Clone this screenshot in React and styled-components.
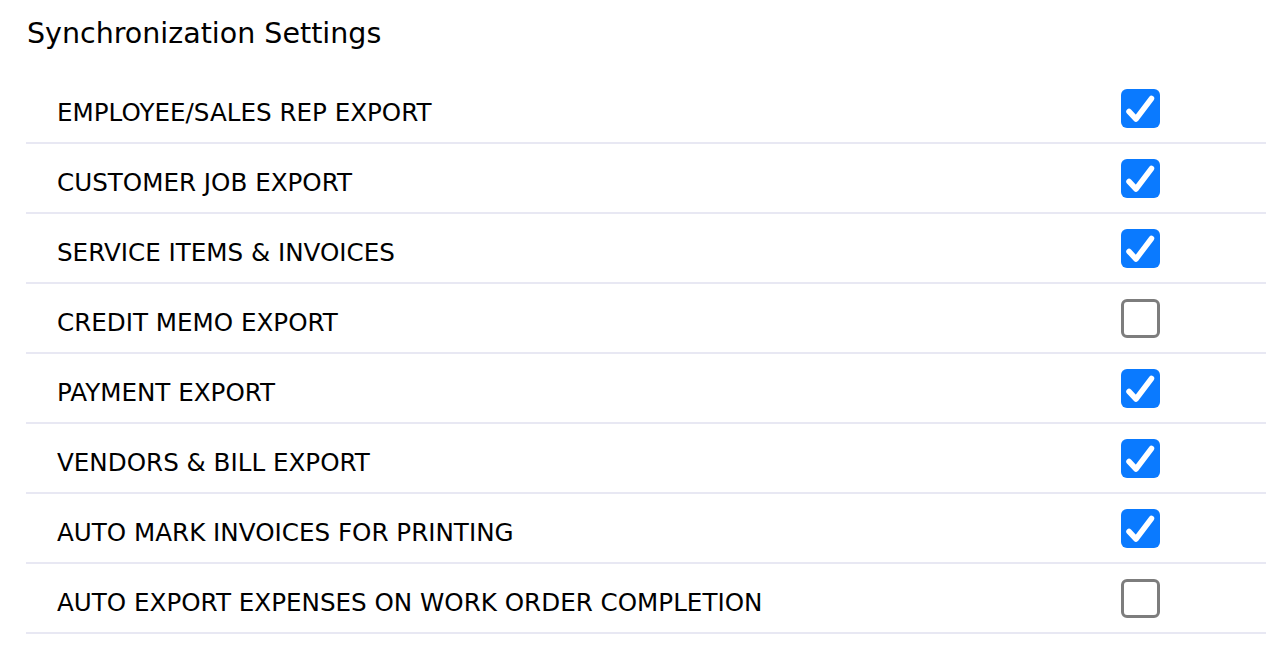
import React, { useState } from "react";
import styled, { createGlobalStyle } from "styled-components";

const Global = createGlobalStyle`
  html, body { margin: 0; padding: 0; background: #ffffff; }
  body { font-family: "DejaVu Sans", Verdana, sans-serif; color: #000; }
`;

const Page = styled.div`
  padding: 14px 22px 0 26px;
`;

const Title = styled.h2`
  margin: 0 0 0 1px;
  font-size: 28.5px;
  font-weight: 400;
  line-height: 40px;
  height: 60px;
`;

const List = styled.div`
  display: flex;
  flex-direction: column;
`;

const Row = styled.label`
  display: flex;
  align-items: center;
  justify-content: space-between;
  box-sizing: border-box;
  height: 70px;
  border-bottom: 2px solid #e8e8f3;
  padding: 0 106px 0 31px;
  cursor: pointer;
`;

const Label = styled.span`
  font-size: 24.6px;
  padding-top: 8px;
`;

const Box = styled.span`
  width: 39px;
  height: 39px;
  box-sizing: border-box;
  border-radius: 6px;
  display: flex;
  align-items: center;
  justify-content: center;
  background: ${(p) => (p.$checked ? "#0a7aff" : "#ffffff")};
  border: ${(p) => (p.$checked ? "none" : "3px solid #7d7d7d")};
`;

const Check = () => (
  <svg width="39" height="39" viewBox="0 0 39 39">
    <path
      d="M8 22.5 L15 30 L30.5 9.5"
      fill="none"
      stroke="#fff"
      strokeWidth="5.5"
      strokeLinecap="round"
      strokeLinejoin="round"
    />
  </svg>
);

const items = [
  ["EMPLOYEE/SALES REP EXPORT", true],
  ["CUSTOMER JOB EXPORT", true],
  ["SERVICE ITEMS & INVOICES", true],
  ["CREDIT MEMO EXPORT", false],
  ["PAYMENT EXPORT", true],
  ["VENDORS & BILL EXPORT", true],
  ["AUTO MARK INVOICES FOR PRINTING", true],
  ["AUTO EXPORT EXPENSES ON WORK ORDER COMPLETION", false],
];

export default function App() {
  const [state, setState] = useState(items.map((i) => i[1]));
  return (
    <Page>
      <Global />
      <Title>Synchronization Settings</Title>
      <List>
        {items.map(([text], i) => (
          <Row
            key={text}
            onClick={() =>
              setState((s) => s.map((v, j) => (j === i ? !v : v)))
            }
          >
            <Label>{text}</Label>
            <Box $checked={state[i]}>{state[i] && <Check />}</Box>
          </Row>
        ))}
      </List>
    </Page>
  );
}
